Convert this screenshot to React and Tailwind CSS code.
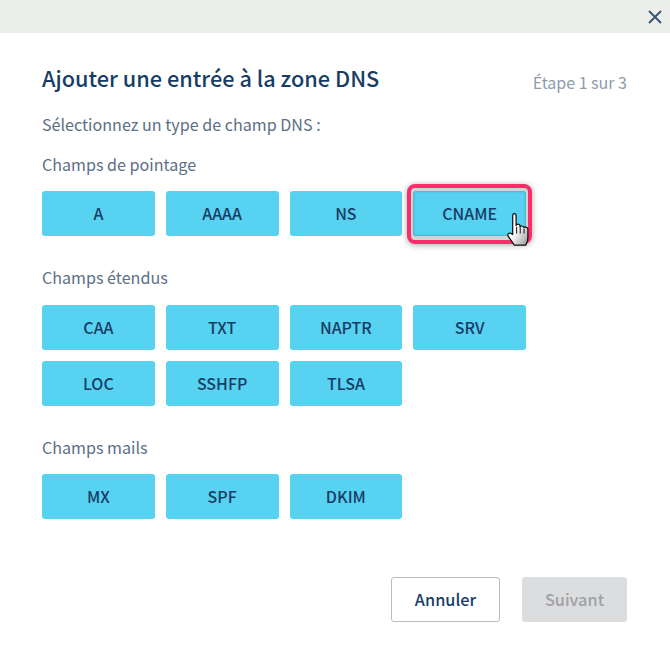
import React from 'react';

const font = "font-['Noto_Sans_CJK_SC','Liberation_Sans',sans-serif]";

const TypeButton = ({ label, active }) => (
    <div className="relative">
        {active && (
            <span className="absolute -inset-x-[6px] -top-[7px] -bottom-[8px] rounded-[8px] border-[4px] border-[#fb2c69] bg-[#d2d4d4] shadow-[0_1px_6px_rgba(0,0,0,0.35)]"></span>
        )}
        <button className={`relative w-full h-[45px] rounded-[3px] bg-[#58d2f1] text-[#173d66] text-[16px] leading-[45px] font-medium ${active ? 'shadow-[inset_0_0_3px_rgba(0,0,0,0.3)]' : ''}`}>
            {label}
        </button>
        {active && (
            <svg className="absolute left-[92px] top-[21px]" width="30" height="36" viewBox="0 0 26 32">
                <defs>
                    <linearGradient id="hand" x1="0" y1="0" x2="1" y2="1">
                        <stop offset="0.45" stopColor="#ffffff" />
                        <stop offset="1" stopColor="#9a9a9a" />
                    </linearGradient>
                </defs>
                <path
                    d="M6.5 3 C6.5 1 9.5 1 9.5 3 L9.5 12 C10 10.5 12.5 10.5 13 12 L13 13.5 C13.5 12 16 12 16.5 14 C17 13 19.5 13 20 15 L20 23 C20 26 19 27.5 18 29.5 L8 29.5 C7 27.5 4 24 2.5 21.5 C1.5 19.5 3 17.5 6.5 20 Z"
                    fill="url(#hand)"
                    stroke="#111111"
                    strokeWidth="1.1"
                    strokeLinejoin="round"
                />
                <path d="M10 13 L10 19 M13.2 14 L13.2 19 M16.6 15 L16.6 19" stroke="#111111" strokeWidth="0.9" fill="none" />
            </svg>
        )}
    </div>
);

const Group = ({ title, rows, className, gridClass }) => (
    <section className={className}>
        <h3 className="text-[16.1px] leading-[24px] text-[#5c6f87] font-normal">{title}</h3>
        <div className={`${gridClass} grid grid-cols-4 gap-x-[11px] gap-y-[11px] w-[484px]`}>
            {rows.map((t) => (
                <TypeButton key={t} label={t} active={t === 'CNAME'} />
            ))}
        </div>
    </section>
);

export default function App() {
    return (
        <div className={`w-[670px] h-[653px] bg-white overflow-hidden ${font}`}>
            <div className="h-[33px] bg-[#eceeec] flex items-center justify-end pr-[8px]">
                <svg width="14" height="14" viewBox="0 0 14 14" className="text-[#3c5674]">
                    <path d="M1 1 L13 13 M13 1 L1 13" stroke="currentColor" strokeWidth="2" fill="none" />
                </svg>
            </div>
            <div className="px-[42px] pt-[30px]">
                <div className="flex items-start justify-between w-[585px]">
                    <h2 className="text-[21.7px] leading-[30px] text-[#173d66] font-medium">Ajouter une entrée à la zone DNS</h2>
                    <span className="text-[16px] leading-[24px] text-[#8d9bad] mt-[7px]">Étape 1 sur 3</span>
                </div>
                <p className="mt-[18px] text-[16.1px] leading-[24px] text-[#5c6f87]">Sélectionnez un type de champ DNS :</p>
                <Group className="mt-[16px]" gridClass="mt-[15px]" title="Champs de pointage" rows={['A', 'AAAA', 'NS', 'CNAME']} />
                <Group className="mt-[29px]" gridClass="mt-[16px]" title="Champs étendus" rows={['CAA', 'TXT', 'NAPTR', 'SRV', 'LOC', 'SSHFP', 'TLSA']} />
                <Group className="mt-[29px]" gridClass="mt-[15px]" title="Champs mails" rows={['MX', 'SPF', 'DKIM']} />
                <div className="mt-[58px] flex justify-end gap-[22px] w-[585px]">
                    <button className="w-[109px] h-[45px] rounded-[3px] border border-[#b9bcbe] bg-white text-[16.3px] font-medium text-[#173d66]">Annuler</button>
                    <button className="w-[105px] h-[45px] rounded-[3px] bg-[#dcdddf] text-[16.3px] font-medium text-[#a0a2a4]">Suivant</button>
                </div>
            </div>
        </div>
    );
}
